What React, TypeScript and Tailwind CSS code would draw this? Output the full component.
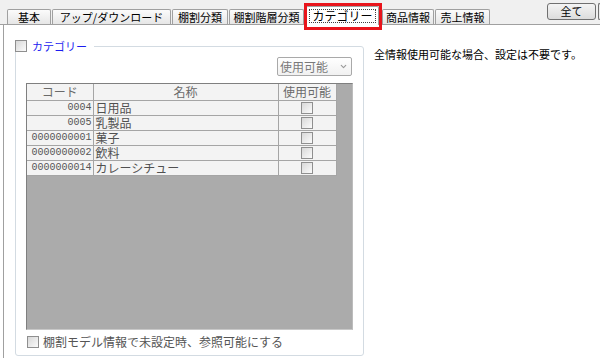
import { ChevronDown } from "lucide-react";

const font = "font-['MS_UI_Gothic','Noto_Sans_CJK_JP',sans-serif]";

function Check() {
	return (
		<span className="inline-block w-[12px] h-[12px] shrink-0 border border-[#8f8f8f] bg-linear-to-br from-[#d8d8d8] to-[#fbfbfb]" />
	);
}

function Tab({ label, className }: { label: string; className: string }) {
	return (
		<div
			className={`h-[15px] flex items-center justify-center border-t border-x border-[#a0a0a0] rounded-t-[2px] bg-linear-to-b from-[#fbfbfb] to-[#e6e6e6] ${className}`}
		>
			{label}
		</div>
	);
}

const rows = [
	{ code: "0004", name: "日用品" },
	{ code: "0005", name: "乳製品" },
	{ code: "0000000001", name: "菓子" },
	{ code: "0000000002", name: "飲料" },
	{ code: "0000000014", name: "カレーシチュー" },
];

export default function App() {
	return (
		<div
			className={`w-[600px] h-[358px] bg-white text-[11px] leading-none text-black overflow-hidden ${font}`}
		>
			{/* tab bar */}
			<div className="flex h-[25px] bg-[#f0f0f0] border-b border-[#a0a0a0]">
				<div className="flex items-end">
					<Tab label="基本" className="ml-[7px] w-[44px]" />
					<Tab label="アップ/ダウンロード" className="ml-[1px] w-[119px]" />
					<Tab label="棚割分類" className="ml-[1px] w-[56px]" />
					<Tab label="棚割階層分類" className="ml-[1px] w-[75px]" />
					{/* selected tab */}
					<div className="relative z-10 ml-[2px] mb-[-1px] w-[73px] h-[19px] border-t border-x border-[#a0a0a0] rounded-t-[2px] bg-white p-[2px]">
						<div className="h-full border border-dotted border-[#404040] flex items-center justify-center text-[12px]">
							カテゴリー
						</div>
						<div className="absolute -left-[3px] -top-[4px] -right-[4px] -bottom-[5px] border-[3px] border-[#e8141b]" />
					</div>
					<Tab label="商品情報" className="ml-[3px] w-[52px]" />
					<Tab label="売上情報" className="ml-[1px] w-[55px]" />
				</div>
				<button className="ml-auto mt-[3px] w-[49px] h-[17px] border border-[#707070] rounded-[3px] bg-linear-to-b from-[#f4f4f4] to-[#dcdcdc] flex items-center justify-center text-[11px]">
					全て
				</button>
				<div className="ml-[2px] mt-[3px] w-[2px] h-[17px] border-l border-y border-[#707070] rounded-l-[3px] bg-[#ececec]" />
			</div>

			{/* content */}
			<div className="flex h-[333px] ml-[3px] border-l border-[#a0a0a0]">
				<fieldset className="ml-[11px] mt-[15px] w-[349px] h-[316px] border border-[#d3dbe2] rounded-[3px] flex flex-col">
					<legend className="flex items-center pr-[7px] -ml-[1px]">
						<Check />
						<span className="ml-[5px] text-[#1c1cf0]">カテゴリー</span>
					</legend>

					<div className="flex justify-end pr-[11px] mt-[5px]">
						<div className="w-[75px] h-[19px] border border-[#a9a9a9] rounded-[2px] bg-linear-to-b from-white to-[#f1f1f1] flex items-center pl-[2px] text-[#7a7a7a] text-[12px]">
							使用可能
							<ChevronDown className="ml-auto mr-[3px] w-[9px] h-[9px] text-[#9a9a9a]" strokeWidth={3} />
						</div>
					</div>

					{/* grid area */}
					<div className="ml-[10px] mt-[7px] w-[327px] h-[247px] bg-[#ababab] border-t border-l border-[#7f7f7f] border-b border-b-[#c8c8c8] border-r border-r-[#bcbcbc]">
						<table className="w-[309px] table-fixed border-collapse bg-[#f3f3f3] text-[#555]">
							<colgroup>
								<col className="w-[66px]" />
								<col className="w-[185px]" />
								<col className="w-[58px]" />
							</colgroup>
							<thead>
								<tr className="h-[16px] text-[#6a6a6a] text-[12px]">
									<th className="font-normal border border-[#a5a5a5] border-t-0 border-l-0 text-center">コード</th>
									<th className="font-normal border border-[#a5a5a5] border-t-0 text-center">名称</th>
									<th className="font-normal border border-[#a5a5a5] border-t-0 text-center">使用可能</th>
								</tr>
							</thead>
							<tbody>
								{rows.map((r) => (
									<tr key={r.code} className="h-[15px]">
										<td className="border border-[#a5a5a5] border-l-0 text-right pr-[1px] font-['Liberation_Mono',monospace] text-[10px] whitespace-nowrap">
											{r.code}
										</td>
										<td className="border border-[#a5a5a5] pl-[2px] text-[12px] text-[#505050]">{r.name}</td>
										<td className="border border-[#a5a5a5]">
											<div className="flex justify-center">
												<Check />
											</div>
										</td>
									</tr>
								))}
							</tbody>
						</table>
					</div>

					<div className="flex items-center ml-[11px] mt-[6px] text-[#555] text-[12px]">
						<Check />
						<span className="ml-[4px]">棚割モデル情報で未設定時、参照可能にする</span>
					</div>
				</fieldset>

				<p className="ml-[10px] mt-[24px] text-[11px]">全情報使用可能な場合、設定は不要です。</p>
			</div>
		</div>
	);
}
